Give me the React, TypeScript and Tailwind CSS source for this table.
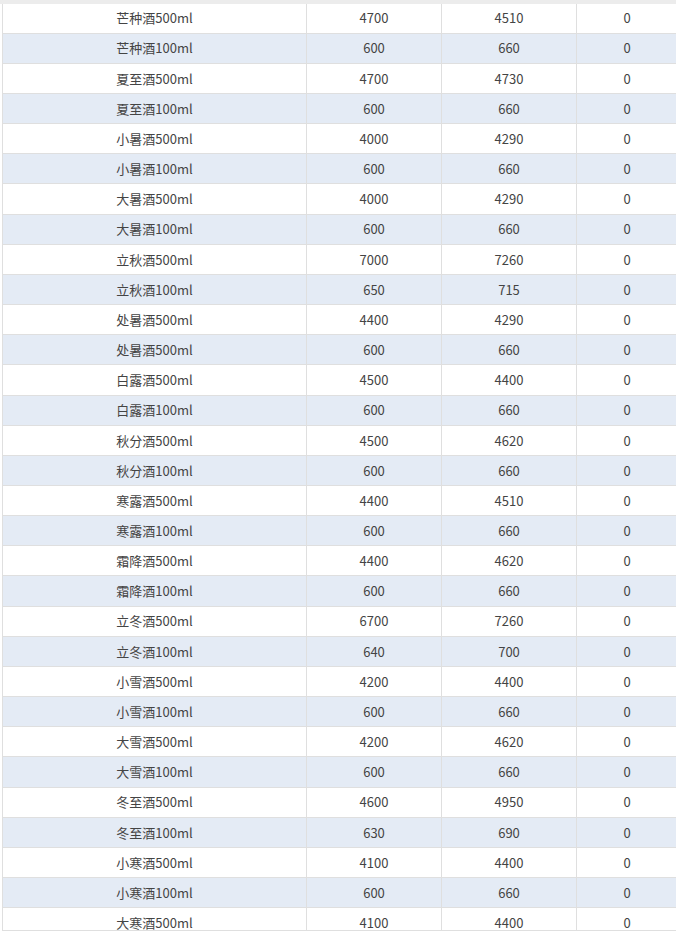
const rows: [string, number, number, number][] = [
   ['芒种酒500ml', 4700, 4510, 0],
   ['芒种酒100ml', 600, 660, 0],
   ['夏至酒500ml', 4700, 4730, 0],
   ['夏至酒100ml', 600, 660, 0],
   ['小暑酒500ml', 4000, 4290, 0],
   ['小暑酒100ml', 600, 660, 0],
   ['大暑酒500ml', 4000, 4290, 0],
   ['大暑酒100ml', 600, 660, 0],
   ['立秋酒500ml', 7000, 7260, 0],
   ['立秋酒100ml', 650, 715, 0],
   ['处暑酒500ml', 4400, 4290, 0],
   ['处暑酒500ml', 600, 660, 0],
   ['白露酒500ml', 4500, 4400, 0],
   ['白露酒100ml', 600, 660, 0],
   ['秋分酒500ml', 4500, 4620, 0],
   ['秋分酒100ml', 600, 660, 0],
   ['寒露酒500ml', 4400, 4510, 0],
   ['寒露酒100ml', 600, 660, 0],
   ['霜降酒500ml', 4400, 4620, 0],
   ['霜降酒100ml', 600, 660, 0],
   ['立冬酒500ml', 6700, 7260, 0],
   ['立冬酒100ml', 640, 700, 0],
   ['小雪酒500ml', 4200, 4400, 0],
   ['小雪酒100ml', 600, 660, 0],
   ['大雪酒500ml', 4200, 4620, 0],
   ['大雪酒100ml', 600, 660, 0],
   ['冬至酒500ml', 4600, 4950, 0],
   ['冬至酒100ml', 630, 690, 0],
   ['小寒酒500ml', 4100, 4400, 0],
   ['小寒酒100ml', 600, 660, 0],
   ['大寒酒500ml', 4100, 4400, 0],
];

export default function App() {
   return (
      <div className="min-h-screen bg-white font-['Noto_Sans_CJK_SC','Noto_Sans',sans-serif] text-[13px] text-[#444]">
         {/* page strip above the table */}
         <div className="h-[3.5px] bg-[#ececec]" />
         <div className="pl-[2px]">
            <div className="h-[927.5px] w-[674px] overflow-hidden border-l border-b border-[#dfdfdf]">
               {rows.map(([name, a, b, c], i) => (
                  <div
                     key={i}
                     className={
                        'flex h-[30.17px] shrink-0 border-b border-[#dfdfdf] ' +
                        (i % 2 === 1 ? 'bg-[#e4ebf5]' : 'bg-white')
                     }
                  >
                     <div className="flex w-[304px] shrink-0 items-center justify-center border-r border-[#dfdfdf]">
                        {name}
                     </div>
                     <div className="flex w-[135px] shrink-0 items-center justify-center border-r border-[#dfdfdf]">
                        {a}
                     </div>
                     <div className="flex w-[135px] shrink-0 items-center justify-center border-r border-[#dfdfdf]">
                        {b}
                     </div>
                     <div className="flex w-[101px] shrink-0 items-center justify-center border-r border-[#dfdfdf]">
                        {c}
                     </div>
                  </div>
               ))}
            </div>
         </div>
      </div>
   );
}
